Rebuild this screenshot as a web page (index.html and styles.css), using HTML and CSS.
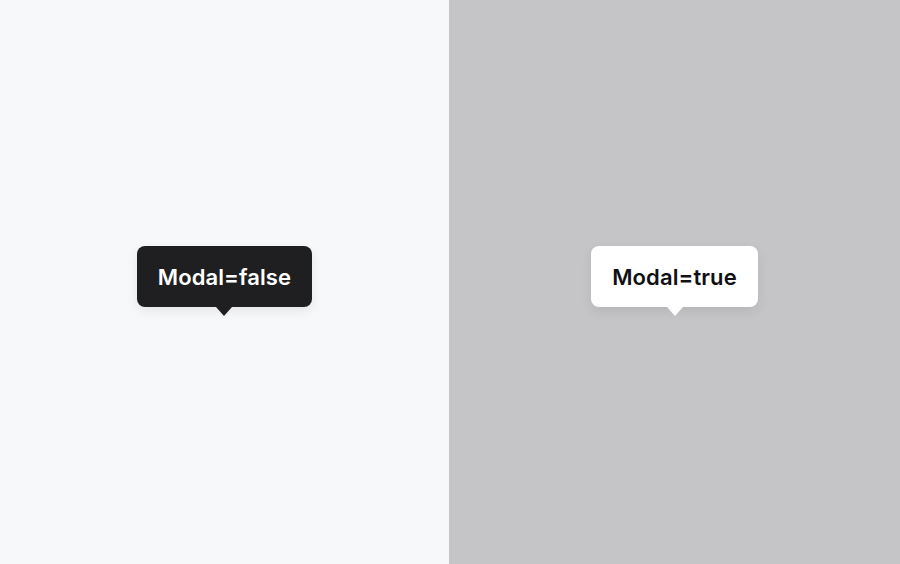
FILE: index.html
```html
<!DOCTYPE html>
<html>
<head>
<meta charset="utf-8">
<link rel="stylesheet" href="styles.css">
</head>
<body>
<div class="page">
  <section class="panel panel-light">
    <div class="tooltip tooltip-dark">
      <div class="bubble">Modal=false</div>
      <div class="arrow"></div>
    </div>
  </section>
  <section class="panel panel-gray">
    <div class="tooltip tooltip-white">
      <div class="bubble">Modal=true</div>
      <div class="arrow"></div>
    </div>
  </section>
</div>
</body>
</html>
```
FILE: styles.css
```css
html, body {
  margin: 0;
  padding: 0;
}
body {
  font-family: Inter, "Noto Sans", sans-serif;
}
.page {
  display: flex;
  width: 900px;
  height: 564px;
}
.panel {
  display: flex;
  align-items: center;
  justify-content: center;
}
.panel-light {
  width: 449px;
  background: #f7f8fa;
}
.panel-gray {
  flex: 1;
  background: #c5c5c7;
}
.tooltip {
  display: flex;
  flex-direction: column;
  align-items: center;
  margin-top: -2px;
}
.bubble {
  height: 61px;
  box-sizing: border-box;
  padding: 0 21px;
  display: flex;
  align-items: center;
  border-radius: 8px;
  font-size: 22px;
  font-weight: 600;
  letter-spacing: 0.1px;
  box-shadow: 0 4px 12px rgba(0, 0, 0, 0.08);
}
.arrow {
  width: 0;
  height: 0;
  border-left: 8px solid transparent;
  border-right: 8px solid transparent;
  border-top: 9px solid;
}
.tooltip-dark .bubble {
  background: #1f1f21;
  color: #ffffff;
}
.tooltip-dark .arrow {
  border-top-color: #1f1f21;
}
.tooltip-white .bubble {
  background: #ffffff;
  color: #111113;
}
.tooltip-white .arrow {
  border-top-color: #ffffff;
}
```
